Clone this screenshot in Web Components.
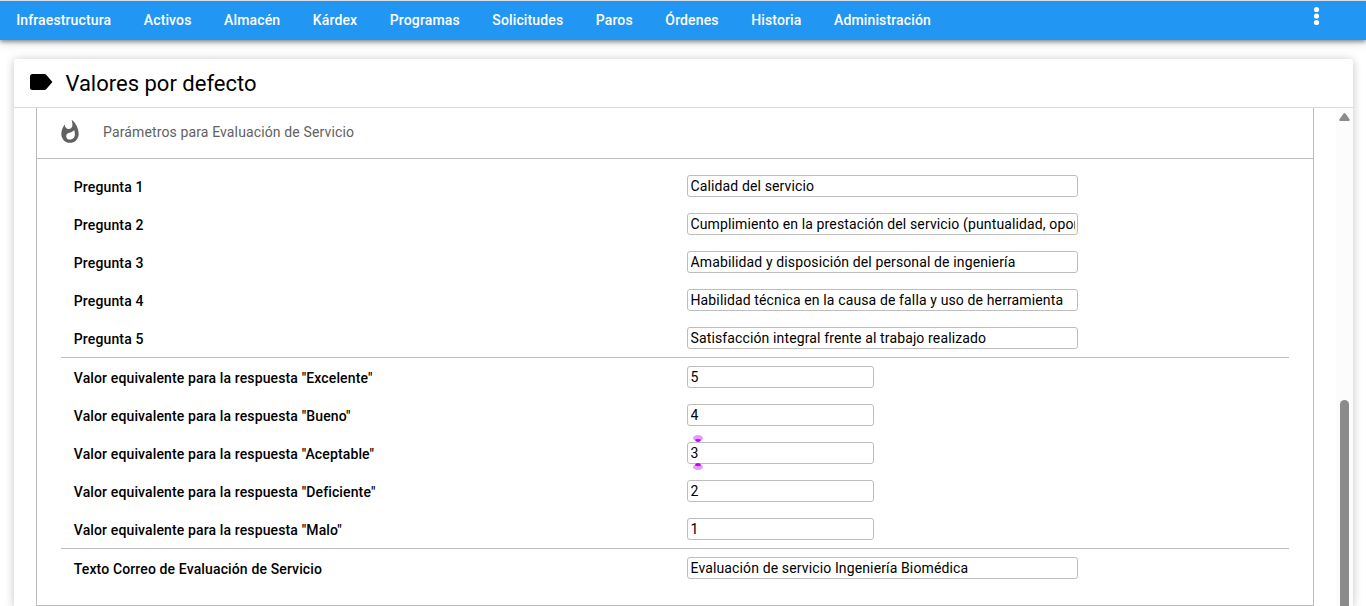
<!DOCTYPE html>
<html lang="es">
<head>
<meta charset="utf-8">
<title>Valores por defecto</title>
<style>
    body {
        display: flex;
        flex-direction: column;
        margin: 0;
        height: 100vh;
        overflow: hidden;
        background-color: #fff;
        color: #000;
        font-family: Roboto, "Liberation Sans", sans-serif;
        font-size: 14px;
        letter-spacing: 0.13px;
    }
</style>
</head>
<body>

<app-navbar>
    <nav-item>Infraestructura</nav-item>
    <nav-item>Activos</nav-item>
    <nav-item>Almacén</nav-item>
    <nav-item>Kárdex</nav-item>
    <nav-item>Programas</nav-item>
    <nav-item>Solicitudes</nav-item>
    <nav-item>Paros</nav-item>
    <nav-item>Órdenes</nav-item>
    <nav-item>Historia</nav-item>
    <nav-item>Administración</nav-item>
</app-navbar>

<page-card>
    <span slot="title">Valores por defecto</span>
    <settings-panel>
        <span slot="title">Parámetros para Evaluación de Servicio</span>
        <field-group>
            <field-row label="Pregunta 1">Calidad del servicio</field-row>
            <field-row label="Pregunta 2">Cumplimiento en la prestación del servicio (puntualidad, oportunidad)</field-row>
            <field-row label="Pregunta 3">Amabilidad y disposición del personal de ingeniería</field-row>
            <field-row label="Pregunta 4">Habilidad técnica en la causa de falla y uso de herramienta</field-row>
            <field-row label="Pregunta 5">Satisfacción integral frente al trabajo realizado</field-row>
        </field-group>
        <field-group>
            <field-row short label='Valor equivalente para la respuesta "Excelente"'>5</field-row>
            <field-row short label='Valor equivalente para la respuesta "Bueno"'>4</field-row>
            <field-row short marked label='Valor equivalente para la respuesta "Aceptable"'>3</field-row>
            <field-row short label='Valor equivalente para la respuesta "Deficiente"'>2</field-row>
            <field-row short label='Valor equivalente para la respuesta "Malo"'>1</field-row>
        </field-group>
        <field-group>
            <field-row label="Texto Correo de Evaluación de Servicio">Evaluación de servicio Ingeniería Biomédica</field-row>
        </field-group>
    </settings-panel>
</page-card>

<script>
// Attaches an open shadow root filled from the given markup
class BaseElement extends HTMLElement {
    constructor() {
        super();

        const template = document.createElement("template");
        template.innerHTML = this.constructor.markup;
        this.shadow = this.attachShadow({ mode: "open" });
        this.shadow.appendChild(template.content.cloneNode(true));
    }
}

class AppNavbar extends BaseElement {
    static markup = `
<style>
    :host {
        display: flex;
        justify-content: space-between;
        flex-shrink: 0;
        box-sizing: border-box;
        height: 40px;
        border-top: 1px solid #dbdde6;
        background-color: #2196f3;
        color: #fff;
        position: relative;
        z-index: 1;
        box-shadow: 0 2px 4px rgba(0, 0, 0, 0.4), 0 4px 10px rgba(0, 0, 0, 0.1);
    }

    nav {
        display: flex;
    }

    button {
        width: 24px;
        height: 30px;
        margin: 0 37px 0 0;
        padding: 0;
        border: 0;
        background: none;
        color: inherit;
    }

    svg {
        display: block;
        fill: currentColor;
    }
</style>

<nav><slot></slot></nav>
<button aria-label="Más opciones">
    <svg width="24" height="30" viewBox="0 0 24 30">
        <circle cx="11.5" cy="8.5" r="2.6"/>
        <circle cx="11.5" cy="15" r="2.6"/>
        <circle cx="11.5" cy="21.5" r="2.6"/>
    </svg>
</button>
`;
}

class NavItem extends BaseElement {
    static markup = `
<style>
    :host {
        display: flex;
        align-items: center;
        padding: 0 16.4px 1px 16.2px;
        font-weight: 500;
        cursor: pointer;
    }
</style>

<slot></slot>
`;
}

class PageCard extends BaseElement {
    static markup = `
<style>
    :host {
        display: flex;
        flex-direction: column;
        flex: 1;
        min-height: 0;
        margin: 19px 13px 0 14px;
        border-radius: 3px 3px 0 0;
        background-color: #fff;
        box-shadow: 0 1px 10px rgba(0, 0, 0, 0.24);
    }

    header {
        display: flex;
        align-items: center;
        box-sizing: border-box;
        height: 49px;
        padding-left: 16px;
        gap: 12.4px;
        border-bottom: 1px solid #dbdbdb;
        font-size: 22px;
        letter-spacing: 0;
    }

    header svg {
        margin-bottom: 2px;
    }

    #body {
        display: flex;
        flex: 1;
        min-height: 0;
    }

    #content {
        flex: 1;
        padding: 0 22px;
    }

    /* Scroll track with its arrow and thumb */
    #scroll {
        display: flex;
        flex-direction: column;
        align-items: center;
        width: 17px;
        background-color: #fcfcfc;
    }

    #scroll svg {
        margin-top: 5px;
        fill: #8b8b8b;
    }

    #thumb {
        width: 9px;
        flex: 1;
        margin-top: 279px;
        border-radius: 5px 5px 0 0;
        background-color: #8b8b8b;
    }
</style>

<header>
    <svg width="23" height="16" viewBox="0 0 23 16">
        <path d="M16.4 1C16 .4 15.3 0 14.5 0H2.4C1.1 0 0 1 0 2.300v11.400C0 15 1.100 16 2.400 16h12.100c.8 0 1.500-.4 1.900-1L22.400 8z"/>
    </svg>
    <slot name="title"></slot>
</header>
<div id="body">
    <div id="content"><slot></slot></div>
    <div id="scroll">
        <svg width="11" height="8" viewBox="0 0 11 8"><path d="M4.600.5Q5.500-.4 6.400.5L10.700 6.500Q11 8 9.800 8H1.200Q0 8 .3 6.500Z"/></svg>
        <div id="thumb"></div>
    </div>
</div>
`;
}

class SettingsPanel extends BaseElement {
    static markup = `
<style>
    :host {
        display: block;
        box-sizing: border-box;
        height: 498px;
        border: 1px solid #bdbdbd;
        border-top: 0;
    }

    header {
        display: flex;
        align-items: center;
        box-sizing: border-box;
        height: 51px;
        padding: 0 20px 2px;
        gap: 20px;
        border-bottom: 1px solid #bdbdbd;
        color: #616161;
    }

    svg {
        fill: #616161;
    }

    #fields {
        padding: 8px 24px 0;
    }
</style>

<header>
    <svg width="26" height="26" viewBox="0 0 24 24">
        <path d="M13.500.67s.74 2.650.74 4.800c0 2.060-1.350 3.730-3.410 3.730-2.070 0-3.630-1.670-3.630-3.730l.03-.36C5.210 7.510 4 10.620 4 14c0 4.420 3.580 8 8 8s8-3.580 8-8C20 8.610 17.410 3.800 13.500.67zM11.710 19c-1.780 0-3.220-1.400-3.220-3.140 0-1.620 1.050-2.760 2.810-3.120 1.770-.36 3.600-1.210 4.620-2.580.39 1.290.59 2.650.59 4.040 0 2.650-2.150 4.800-4.800 4.800z"/>
    </svg>
    <slot name="title"></slot>
</header>
<div id="fields"><slot></slot></div>
`;
}

class FieldGroup extends BaseElement {
    static markup = `
<style>
    :host {
        display: block;
        border-bottom: 1px solid #bdbdbd;
    }

    :host(:last-of-type) {
        border-bottom: 0;
    }
</style>

<slot></slot>
`;
}

class FieldRow extends BaseElement {
    static markup = `
<style>
    :host {
        display: grid;
        grid-template-columns: 1fr 1fr;
        align-items: center;
        height: 38px;
    }

    #label {
        padding: 2px 0 0 12.8px;
        font-weight: 500;
    }

    #cell {
        position: relative;
        padding-left: 12px;
    }

    #input {
        box-sizing: border-box;
        width: 391px;
        height: 22px;
        padding: 0 2px 0 2.5px;
        border: 1px solid #bdbdbd;
        border-radius: 3px;
        background-color: #fff;
        line-height: 20px;
    }

    #text {
        overflow: hidden;
        white-space: nowrap;
    }

    :host([short]) #input {
        width: 187px;
    }

    /* Selection handles above and below the value */
    .handle {
        display: none;
        position: absolute;
        left: 18px;
    }

    :host([marked]) .handle {
        display: block;
    }

    .top {
        top: -7px;
    }

    .bottom {
        bottom: -6px;
        transform: scaleY(-1);
    }
</style>

<div id="label"></div>
<div id="cell">
    <div id="input" role="textbox"><div id="text"><slot></slot></div></div>
    <svg class="handle top" width="10" height="7" viewBox="0 0 10 7">
        <ellipse cx="5" cy="3" rx="5" ry="3" fill="#e59bff"/>
        <path d="M1.800 4.800Q5 3 8.200 4.800 7.300 7 5 7T1.800 4.800z" fill="#c400ff"/>
    </svg>
    <svg class="handle bottom" width="10" height="7" viewBox="0 0 10 7">
        <ellipse cx="5" cy="3" rx="5" ry="3" fill="#e59bff"/>
        <path d="M1.800 4.800Q5 3 8.200 4.800 7.300 7 5 7T1.800 4.800z" fill="#c400ff"/>
    </svg>
</div>
`;

    connectedCallback() {
        this.shadow.querySelector("#label").textContent = this.getAttribute("label");
    }
}

window.customElements.define("app-navbar", AppNavbar);
window.customElements.define("nav-item", NavItem);
window.customElements.define("page-card", PageCard);
window.customElements.define("settings-panel", SettingsPanel);
window.customElements.define("field-group", FieldGroup);
window.customElements.define("field-row", FieldRow);
</script>
</body>
</html>
